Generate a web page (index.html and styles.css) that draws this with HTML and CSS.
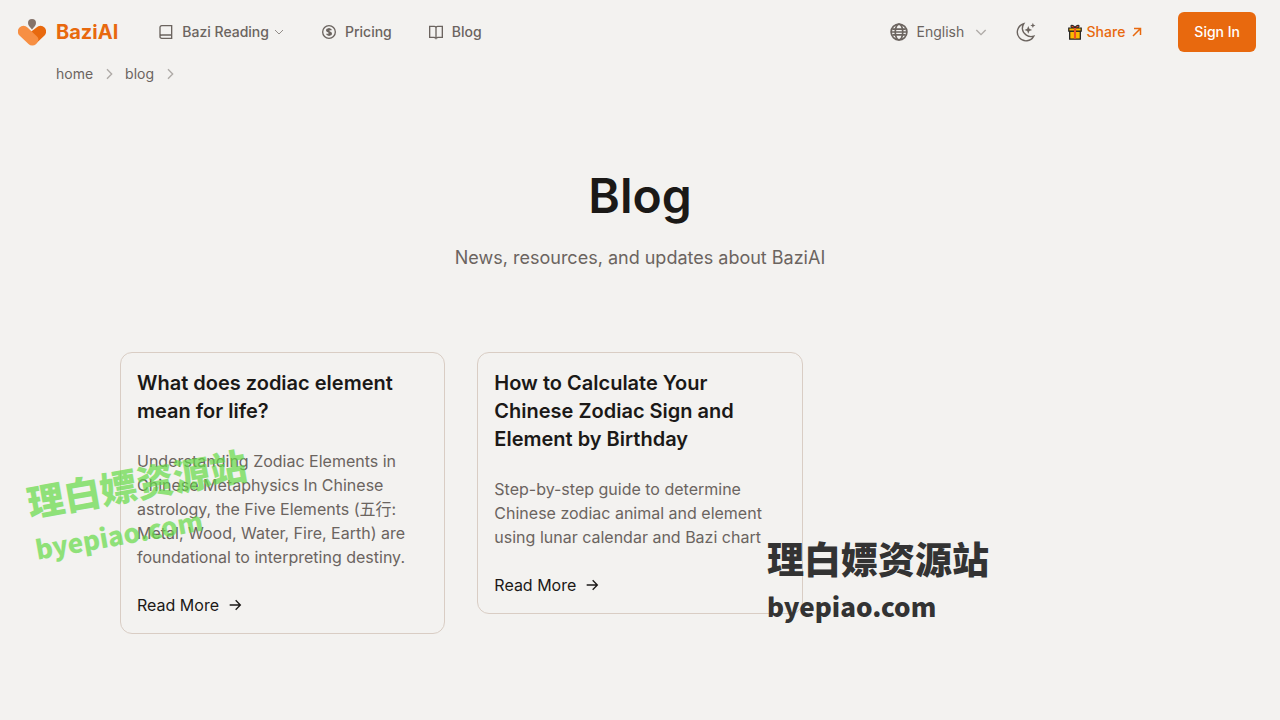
FILE: index.html
```html
<!DOCTYPE html>
<html lang="en">
<head>
    <meta charset="UTF-8">
    <meta name="viewport" content="width=device-width, initial-scale=1.0">
    <title>Blog - BaziAI</title>
    <link rel="stylesheet" href="styles.css">
</head>
<body>
    <header class="site-header">
        <a class="brand" href="#">
            <svg class="brand-logo" viewBox="0 0 28 28" aria-hidden="true">
                <path d="M14 11.500C12 9 10 7.500 10 5a4 4 0 0 1 8 0C18 7.500 16 9 14 11.500z" fill="#85736a"/>
                <path d="M12 14.500 18.500 9.500a5.600 5.600 0 0 1 8 8L17 26.500z" fill="#e8690e"/>
                <path d="M1.500 17.500a5.600 5.600 0 0 1 8-8l9.500 9c3 3 .5 6-1 7.500a5.200 5.200 0 0 1-7.500 0z" fill="#f78f43"/>
            </svg>
            <span>BaziAI</span>
        </a>

        <nav class="main-nav" aria-label="Main">
            <button class="nav-item" type="button">
                <svg class="icon-nav" viewBox="0 0 24 24" aria-hidden="true"><path d="M3 19V5a2.500 2.500 0 0 1 2.500-2.500H20.500v19H5.500A2.500 2.500 0 0 1 3 19a2.500 2.500 0 0 1 2.500-2.500h15"/></svg>
                <span>Bazi Reading</span>
                <svg class="icon-caret" viewBox="0 0 24 24" aria-hidden="true"><path d="m4 8 8 8 8-8"/></svg>
            </button>
            <a class="nav-item" href="#">
                <svg class="icon-nav" viewBox="0 0 24 24" aria-hidden="true"><circle cx="12" cy="12" r="9.500"/><path d="M15.500 9.500C15 8 13.800 7.500 12 7.500c-2 0-3.500.8-3.500 2.300 0 3 7 1.400 7 4.400 0 1.500-1.500 2.300-3.500 2.300-1.800 0-3-.6-3.500-2M12 6v12M9.500 8.500l5 7"/></svg>
                <span>Pricing</span>
            </a>
            <a class="nav-item" href="#">
                <svg class="icon-nav" viewBox="0 0 24 24" aria-hidden="true"><path d="M2.500 3.500h7A2.500 2.500 0 0 1 12 6a2.500 2.500 0 0 1 2.500-2.500h7v16.500h-7L12 21.500 9.500 20h-7zM12 6v17"/></svg>
                <span>Blog</span>
            </a>
        </nav>

        <div class="header-actions">
            <label class="language">
                <svg class="icon-globe" viewBox="0 0 24 24" aria-hidden="true"><circle cx="12" cy="12" r="9.500"/><ellipse cx="12" cy="12" rx="4.500" ry="9.500"/><path d="M2.500 12h19M4 8.500h16M4 15.500h16"/></svg>
                <select class="language-select" aria-label="Language">
                    <option>English</option>
                </select>
                <svg class="icon-chevron" viewBox="0 0 24 24" aria-hidden="true"><path d="m5 9 7 7 7-7"/></svg>
            </label>

            <button class="theme-toggle" type="button" aria-label="Toggle theme">
                <svg class="icon-moon" viewBox="0 0 24 24" aria-hidden="true">
                    <path d="M9.500 3A9.500 9.500 0 1 0 20.500 16.500 9.600 9.600 0 0 1 8 8.500c0-2 .5-4 1.500-5.500z"/>
                    <path class="star" d="M14.500 5.500l1.200 3 3 1.200-3 1.200-1.200 3-1.200-3-3-1.200 3-1.200zM19.500 2l.8 2 2 .8-2 .8-.8 2-.8-2-2-.8 2-.8z"/>
                </svg>
            </button>

            <a class="share" href="#">
                <svg class="icon-gift" viewBox="0 0 16 18" aria-hidden="true">
                    <path d="M8 5C5 5 3 3.500 3.500 2S7 2 8 4c1-2 4-3.500 4.500-2S11 5 8 5z" fill="#e94b25" stroke="#222" stroke-width="1.200"/>
                    <path d="M2 8h12v9H2z" fill="#fdb900" stroke="#222" stroke-width="1.400"/>
                    <path d="M1 4.500h14V8H1z" fill="#fdb900" stroke="#222" stroke-width="1.400"/>
                    <path d="M6.800 4.500h2.400v12H6.800z" fill="#ee5126" stroke="none"/>
                </svg>
                <span>Share</span>
                <svg class="icon-external" viewBox="0 0 12 12" aria-hidden="true"><path d="M2 10 9.500 2.500M3 2.500h6.500V9"/></svg>
            </a>

            <button class="sign-in" type="button">Sign In</button>
        </div>
    </header>

    <nav class="breadcrumb" aria-label="Breadcrumb">
        <a href="#">home</a>
        <svg class="icon-chevron" viewBox="0 0 24 24" aria-hidden="true"><path d="m9 5 7 7-7 7"/></svg>
        <a href="#">blog</a>
        <svg class="icon-chevron" viewBox="0 0 24 24" aria-hidden="true"><path d="m9 5 7 7-7 7"/></svg>
    </nav>

    <main class="container">
        <div class="page-intro">
            <h1>Blog</h1>
            <p>News, resources, and updates about BaziAI</p>
        </div>

        <div class="post-grid">
            <article class="post-card">
                <h2>What does zodiac element mean for life?</h2>
                <p>Understanding Zodiac Elements in Chinese Metaphysics In Chinese astrology, the Five Elements (五行: Metal, Wood, Water, Fire, Earth) are foundational to interpreting destiny.</p>
                <a class="read-more" href="#">Read More
                    <svg class="icon-arrow" viewBox="0 0 24 24" aria-hidden="true"><path d="M4 12h16M13 5l7 7-7 7"/></svg>
                </a>
            </article>
            <article class="post-card">
                <h2>How to Calculate Your Chinese Zodiac Sign and Element by Birthday</h2>
                <p>Step-by-step guide to determine Chinese zodiac animal and element using lunar calendar and Bazi chart</p>
                <a class="read-more" href="#">Read More
                    <svg class="icon-arrow" viewBox="0 0 24 24" aria-hidden="true"><path d="M4 12h16M13 5l7 7-7 7"/></svg>
                </a>
            </article>
        </div>
    </main>

    <!-- Watermarks over the page -->
    <div class="watermark watermark-green"><span>理白嫖资源站</span><span class="watermark-url">byepiao.com</span></div>
    <div class="watermark watermark-dark"><span>理白嫖资源站</span><span class="watermark-url">byepiao.com</span></div>
</body>
</html>
```

FILE: styles.css
```css
:root {
    --primary-color: #e8690e;
    --background: #f3f2f0;
    --text: #1b1917;
    --muted: #6b645f;
    --border: #d9cdc4;
}

* {
    box-sizing: border-box;
    margin: 0;
    padding: 0;
}

body {
    position: relative;
    min-height: 100vh;
    overflow-x: hidden;
    font-family: Inter, "Noto Sans CJK SC", sans-serif;
    font-size: 16px;
    line-height: 24px;
    color: var(--text);
    background: var(--background);
}

a {
    color: inherit;
    text-decoration: none;
}

button,
select {
    font: inherit;
    color: inherit;
    background: none;
    border: none;
    cursor: pointer;
}

svg {
    flex-shrink: 0;
    fill: none;
    stroke: currentColor;
    stroke-width: 2;
}

/* Header */
.site-header {
    display: flex;
    align-items: center;
    height: 64px;
    padding: 0 24px 0 18px;
    font-size: 14px;
    font-weight: 500;
    line-height: 20px;
    color: var(--muted);
}

.brand {
    display: flex;
    align-items: center;
    gap: 10px;
    font-size: 20px;
    font-weight: 700;
    line-height: 28px;
    color: var(--primary-color);
}

.brand-logo {
    width: 28px;
    height: 28px;
    stroke: none;
}

.main-nav {
    display: flex;
    align-items: center;
    gap: 36px;
    margin-left: 40px;
}

.nav-item {
    display: flex;
    align-items: center;
}

.icon-nav {
    width: 16px;
    height: 16px;
    margin-right: 8px;
}

.icon-caret {
    width: 12px;
    height: 12px;
    margin-left: 4px;
    opacity: 0.7;
}

.header-actions {
    display: flex;
    align-items: center;
    margin-left: auto;
}

.language {
    display: flex;
    align-items: center;
    gap: 8px;
    font-weight: 400;
}

.language-select {
    appearance: none;
    width: 48px;
}

.icon-globe {
    width: 20px;
    height: 20px;
}

.icon-chevron {
    width: 16px;
    height: 16px;
    opacity: 0.5;
}

.theme-toggle {
    display: flex;
    margin-left: 26px;
}

.icon-moon {
    width: 22px;
    height: 22px;
    stroke-width: 1.5;
}

.icon-moon .star {
    fill: currentColor;
    stroke: none;
}

.share {
    display: flex;
    align-items: center;
    gap: 4px;
    margin-left: 30px;
    color: var(--primary-color);
}

.icon-gift {
    width: 16px;
    height: 16px;
}

.icon-external {
    width: 12px;
    height: 12px;
    margin-left: 2px;
    stroke-width: 1.5;
}

.sign-in {
    height: 40px;
    margin-left: 35px;
    padding: 0 16px;
    border-radius: 6px;
    color: #fff;
    background: var(--primary-color);
}

/* Breadcrumb */
.breadcrumb {
    display: flex;
    align-items: center;
    gap: 8px;
    padding: 0 56px;
    font-size: 14px;
    line-height: 20px;
    color: var(--muted);
}

/* Blog list */
.container {
    max-width: 1088px;
    margin: 0 auto;
    padding: 88px 24px;
}

.page-intro {
    margin-bottom: 80px;
    text-align: center;
}

.page-intro h1 {
    margin-bottom: 24px;
    font-size: 48px;
    font-weight: 600;
    line-height: 48px;
}

.page-intro p {
    font-size: 18px;
    line-height: 28px;
    color: var(--muted);
}

.post-grid {
    display: grid;
    grid-template-columns: repeat(3, 1fr);
    align-items: start;
    gap: 32px;
}

.post-card {
    padding: 16px;
    border: 1px solid var(--border);
    border-radius: 12px;
}

.post-card h2 {
    margin-bottom: 24px;
    font-size: 20px;
    font-weight: 600;
    line-height: 28px;
}

.post-card p {
    margin-bottom: 24px;
    color: var(--muted);
}

.read-more {
    display: flex;
    align-items: center;
    gap: 8px;
}

.icon-arrow {
    width: 16px;
    height: 16px;
}

/* Watermarks */
.watermark {
    position: absolute;
    display: flex;
    flex-direction: column;
    font-size: 37px;
    font-weight: 900;
    line-height: 48px;
    font-family: "Noto Sans CJK SC", sans-serif;
    white-space: nowrap;
    pointer-events: none;
}

.watermark-url {
    font-size: 26px;
}

.watermark-green {
    top: 478px;
    left: 23px;
    color: #66da48;
    opacity: 0.7;
    transform: rotate(-10deg);
    transform-origin: left top;
}

.watermark-dark {
    top: 534px;
    left: 767px;
    color: #333;
}

@media (max-width: 900px) {
    .main-nav {
        display: none;
    }

    .post-grid {
        grid-template-columns: 1fr;
    }
}
```
